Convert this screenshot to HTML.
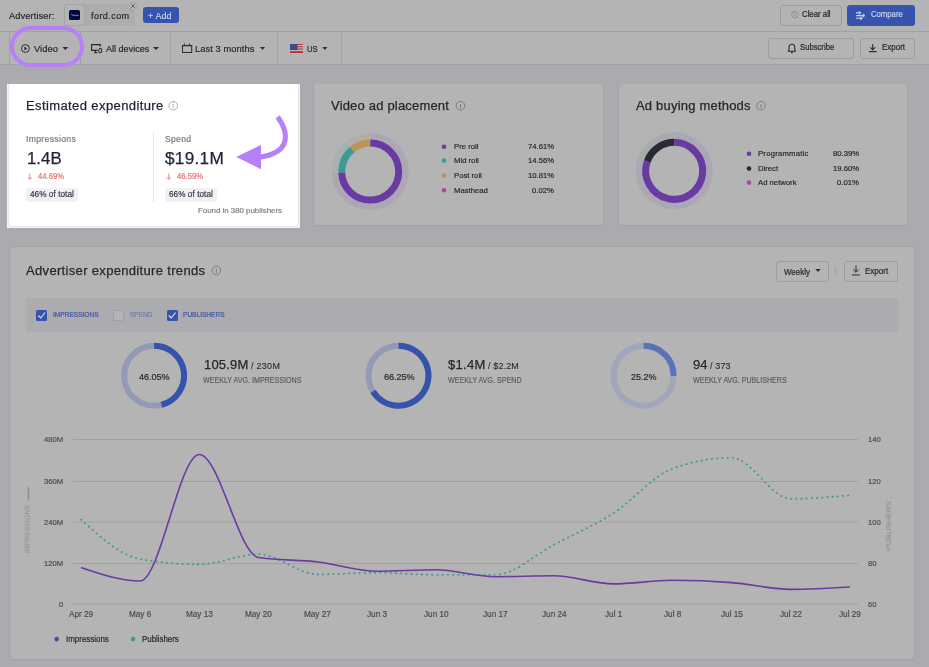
<!DOCTYPE html>
<html><head><meta charset="utf-8">
<style>
*{box-sizing:border-box;margin:0;padding:0}
html,body{width:929px;height:667px;overflow:hidden}
body{position:relative;background:#ababaf;font-family:"Liberation Sans",sans-serif}
.a{position:absolute}
.t{position:absolute;white-space:nowrap;font-family:"Liberation Sans",sans-serif;will-change:transform}
.bar{position:absolute;left:0;width:929px;background:#b4b4b4}
.vs{position:absolute;width:1px;background:#a2a2a3}
.btn{position:absolute;border:1px solid #9d9da0;border-radius:3px;background:#b4b4b4}
.card{position:absolute;background:#b4b4b4;border-radius:3px;box-shadow:0 0 0 1px #a3a3a8, 0 1px 2px rgba(0,0,0,0.06)}
svg{position:absolute;left:0;top:0;overflow:visible}
</style></head><body>
<!-- top bars -->
<div class="bar" style="top:0;height:31px"></div>
<div class="a" style="left:0;top:31px;width:929px;height:1px;background:#a2a2a4"></div>
<div class="bar" style="top:32px;height:32px"></div>
<div class="a" style="left:0;top:64px;width:929px;height:1px;background:#a2a2a4"></div>
<div class="vs" style="left:9px;top:32px;height:32px"></div>
<div class="vs" style="left:80px;top:32px;height:32px"></div>
<div class="vs" style="left:170px;top:32px;height:32px"></div>
<div class="vs" style="left:277px;top:32px;height:32px"></div>
<div class="vs" style="left:341px;top:32px;height:32px"></div>

<!-- chip -->
<div class="a" style="left:64px;top:4px;width:71px;height:22px;background:#adadaf;border-radius:3px"></div>
<div class="a" style="left:64px;top:4px;width:21px;height:22px;background:#b4b4b4;border:1px solid #a4a4a6;border-radius:3px"></div>
<div class="a" style="left:69px;top:10px;width:11px;height:10px;background:#05063c;border-radius:1.5px"></div>
<svg width="929" height="667"><path d="M70.5,13.5 C72,15 74,15.5 79,15.2 M71.5,14.8 C73,15.6 76,15.8 78.5,15.5" stroke="#8f93b8" stroke-width="0.6" fill="none"/></svg>

<div class="btn" style="left:143px;top:7px;width:36px;height:16px;background:#3654ad;border:none"></div>
<div class="btn" style="left:780px;top:5px;width:62px;height:21px"></div>

<div class="btn" style="left:847px;top:5px;width:68px;height:21px;background:#3654ad;border:none"></div>
<div class="btn" style="left:768px;top:38px;width:86px;height:21px"></div>
<div class="btn" style="left:860px;top:38px;width:55px;height:21px"></div>

<svg width="929" height="667">
 <!-- play icon -->
 <circle cx="25.4" cy="48.5" r="3.9" fill="none" stroke="#2b2b33" stroke-width="1"/>
 <path d="M24.3,46.6 L27.2,48.5 L24.3,50.4Z" fill="#2b2b33"/>
 <path d="M62.4,47 L68.2,47 L65.3,50Z" fill="#2b2b33"/>
 <!-- devices icon -->
 <path d="M97.6,50.4 L91.6,50.4 L91.6,44.6 L100.2,44.6 L100.2,46.8" fill="none" stroke="#23232b" stroke-width="1.1"/>
 <path d="M95.5,50.4 L95.5,52.6 M94,52.7 L97.6,52.7" stroke="#23232b" stroke-width="1"/>
 <rect x="98.9" y="48.6" width="2.8" height="4" rx="0.6" fill="none" stroke="#23232b" stroke-width="1"/>
 <path d="M153,47 L159,47 L156,50Z" fill="#2b2b33"/>
 <!-- calendar -->
 <rect x="182.5" y="45.5" width="9.2" height="7" fill="none" stroke="#2b2b33" stroke-width="1"/>
 <path d="M182,45.6 L192.2,45.6" stroke="#2b2b33" stroke-width="1.3"/>
 <path d="M184.4,43.4 L184.4,45 M189.4,43.4 L189.4,45" stroke="#2b2b33" stroke-width="0.9"/>
 <path d="M260,47 L265,47 L262.5,50Z" fill="#2b2b33"/>
 <!-- flag -->
 <rect x="290" y="44" width="13" height="9" fill="#b8b8c0"/>
 <rect x="290" y="44" width="13" height="1" fill="#b83a3a"/>
 <rect x="290" y="46.2" width="13" height="1.1" fill="#b83a3a"/>
 <rect x="290" y="48.5" width="13" height="1.1" fill="#b83a3a"/>
 <rect x="290" y="51.2" width="13" height="1.8" fill="#b8322f"/>
 <rect x="290" y="44" width="7.5" height="6" fill="#3d4a8c"/>
 <path d="M322.4,47 L327.4,47 L324.9,50Z" fill="#2b2b33"/>
 <!-- close x in clear all -->
 <circle cx="795" cy="14.6" r="3.3" fill="none" stroke="#8a8a8e" stroke-width="0.9"/><path d="M793.7,13.3 L796.3,15.9 M796.3,13.3 L793.7,15.9" stroke="#8a8a8e" stroke-width="0.8"/>
 <circle cx="133" cy="5.9" r="3.6" fill="#bababc" stroke="#9c9ca0" stroke-width="0.7"/><path d="M131.2,4.1 L134.8,7.7 M134.8,4.1 L131.2,7.7" stroke="#48484c" stroke-width="0.9"/>
 <!-- compare icon -->
 <g stroke="#cdd3ec" stroke-width="1.1" fill="#cdd3ec">
 <path d="M856,12.9 L859.5,12.9 M856,15.6 L863.3,15.6 M856,18.3 L861,18.3"/>
 <path d="M859.3,11.2 L861.2,12.9 L859.3,14.6Z M863,13.9 L865,15.6 L863,17.3Z M860.7,16.6 L862.6,18.3 L860.7,20Z" stroke-width="0.5"/>
 </g>
 <!-- bell -->
 <path d="M788.3,51.3 L795.5,51.3 L794.8,50 L794.8,47.3 C794.8,45.3 793.7,44.3 791.9,44.3 C790.1,44.3 789,45.3 789,47.3 L789,50Z" fill="none" stroke="#2b2b33" stroke-width="1.1" stroke-linejoin="round"/>
 <path d="M791,52.6 L792.8,52.6" stroke="#2b2b33" stroke-width="1.2"/>
 <!-- download -->
 <path d="M872.7,44 L872.7,49.6 M870.2,47.3 L872.7,49.8 L875.2,47.3" stroke="#2b2b33" stroke-width="1.1" fill="none"/>
 <path d="M869,51.6 L876.6,51.6" stroke="#2b2b33" stroke-width="1.2"/>
</svg>

<!-- cards -->
<div class="card" style="left:314px;top:84px;width:289px;height:141px"></div>
<div class="card" style="left:619px;top:84px;width:288px;height:141px"></div>
<div class="card" style="left:10px;top:247px;width:904px;height:412px"></div>

<!-- highlight card 1 -->
<div class="a" style="left:7px;top:84px;width:293px;height:144px;background:#f3f3f8"></div>
<div class="a" style="left:9px;top:82px;width:289px;height:143.5px;background:#fff;border-radius:3px;box-shadow:0 0 0 1px #e6e6ee"></div>
<div class="a" style="left:0;top:65px;width:929px;height:19px;background:#ababaf"></div>
<div class="a" style="left:153px;top:132px;width:1px;height:70px;background:#e3e3ea"></div>
<div class="a" style="left:26px;top:188px;width:52px;height:13.5px;background:#f1f1f4;border-radius:3px"></div>
<div class="a" style="left:165px;top:188px;width:52px;height:13.5px;background:#f1f1f4;border-radius:3px"></div>

<!-- filter bar -->
<div class="a" style="left:26px;top:298px;width:872px;height:33.5px;background:#acabb0;border-radius:3px"></div>
<div class="a" style="left:36px;top:310px;width:11px;height:10.5px;background:#3654ad;border-radius:1.5px"></div>
<div class="a" style="left:113px;top:310px;width:11px;height:10.5px;background:#b4b4b4;border:1px solid #a0a0a4;border-radius:1.5px"></div>
<div class="a" style="left:166.5px;top:310px;width:11px;height:10.5px;background:#3654ad;border-radius:1.5px"></div>
<div class="btn" style="left:775.5px;top:260.5px;width:53px;height:21px"></div>
<div class="a" style="left:835px;top:268px;width:1px;height:6px;background:#9d9da0"></div>
<div class="btn" style="left:843.5px;top:260.5px;width:54px;height:21px"></div>

<svg width="929" height="667">
 <!-- info icons -->
 <circle cx="173.2" cy="105.7" r="4.3" fill="none" stroke="#a3a5b0" stroke-width="0.9"/>
 <path d="M173.2,104 L173.2,108.2" stroke="#a3a5b0" stroke-width="0.9"/>
 <circle cx="173.2" cy="102.8" r="0.5" fill="#a3a5b0"/>
 <circle cx="460.5" cy="105.7" r="4.3" fill="none" stroke="#76767c" stroke-width="0.9"/>
 <path d="M460.5,104 L460.5,108.2" stroke="#76767c" stroke-width="0.9"/>
 <circle cx="761" cy="105.7" r="4.3" fill="none" stroke="#76767c" stroke-width="0.9"/>
 <path d="M761,104 L761,108.2" stroke="#76767c" stroke-width="0.9"/>
 <circle cx="216.4" cy="270.6" r="4.3" fill="none" stroke="#76767c" stroke-width="0.9"/>
 <path d="M216.4,269 L216.4,273.2" stroke="#76767c" stroke-width="0.9"/>
 <!-- red arrows -->
 <path d="M29.8,173.5 L29.8,179.5 M27.8,177.3 L29.8,179.5 L31.8,177.3" stroke="#f0757a" stroke-width="0.9" fill="none"/>
 <path d="M168.8,173.5 L168.8,179.5 M166.8,177.3 L168.8,179.5 L170.8,177.3" stroke="#f0757a" stroke-width="0.9" fill="none"/>
 <!-- arrow -->
 <path d="M277.6,116.8 C289,133 292,153 258,157.4" stroke="#b680f8" stroke-width="5" fill="none"/>
 <path d="M236.3,157.1 L261,144.9 L261,169.2Z" fill="#b680f8"/>
 <!-- checks -->
 <path d="M38.3,315.5 L40.8,318 L45,312.5" stroke="#dfe4f5" stroke-width="1.1" fill="none"/>
 <path d="M168.8,315.5 L171.3,318 L175.5,312.5" stroke="#dfe4f5" stroke-width="1.1" fill="none"/>
 <!-- weekly caret -->
 <path d="M815.5,269 L820.6,269 L818,272Z" fill="#2b2b33"/>
 <path d="M856,265.5 L856,272 M853.2,269.5 L856,272.3 L858.8,269.5 M852,275 L860,275" stroke="#2b2b33" stroke-width="1" fill="none"/>
 <!-- donuts -->
 <path d="M370.20,136.35 A35.25,35.25 0 1 1 334.96,172.46" stroke="#aca7b5" stroke-width="6.50" fill="none"/><path d="M370.20,143.10 A28.50,28.50 0 1 1 341.71,172.30" stroke="#6a3aa3" stroke-width="7.00" fill="none"/><path d="M334.96,172.46 A35.25,35.25 0 0 1 348.02,144.20" stroke="#a7b1b0" stroke-width="6.50" fill="none"/><path d="M341.71,172.30 A28.50,28.50 0 0 1 352.27,149.45" stroke="#3e9a94" stroke-width="7.00" fill="none"/><path d="M348.02,144.20 A35.25,35.25 0 0 1 370.16,136.35" stroke="#b3aea6" stroke-width="6.50" fill="none"/><path d="M352.27,149.45 A28.50,28.50 0 0 1 370.16,143.10" stroke="#b99652" stroke-width="7.00" fill="none"/><path d="M370.16,136.35 A35.25,35.25 0 0 1 370.20,136.35" stroke="#b0a6b0" stroke-width="6.50" fill="none"/><path d="M370.16,143.10 A28.50,28.50 0 0 1 370.20,143.10" stroke="#b0479e" stroke-width="7.00" fill="none"/>
 <path d="M674.20,135.55 A35.25,35.25 0 1 1 640.95,159.09" stroke="#aca7b5" stroke-width="6.50" fill="none"/><path d="M674.20,142.30 A28.50,28.50 0 1 1 647.32,161.33" stroke="#6a3aa3" stroke-width="7.00" fill="none"/><path d="M640.95,159.09 A35.25,35.25 0 0 1 674.18,135.55" stroke="#a9aaab" stroke-width="6.50" fill="none"/><path d="M647.32,161.33 A28.50,28.50 0 0 1 674.18,142.30" stroke="#282a36" stroke-width="7.00" fill="none"/>
 <circle cx="154.10" cy="375.70" r="30.00" stroke="#939ab5" stroke-width="6.00" fill="none"/><path d="M154.10,345.70 A30.00,30.00 0 0 1 161.47,404.78" stroke="#3553ad" stroke-width="6.00" fill="none"/>
 <circle cx="398.50" cy="375.70" r="30.00" stroke="#939ab5" stroke-width="6.00" fill="none"/><path d="M398.50,345.70 A30.00,30.00 0 1 1 372.92,391.37" stroke="#3553ad" stroke-width="6.00" fill="none"/>
 <circle cx="643.60" cy="375.70" r="30.00" stroke="#a2a6bb" stroke-width="6.00" fill="none"/><path d="M643.60,345.70 A30.00,30.00 0 0 1 673.60,376.08" stroke="#5b72b8" stroke-width="6.00" fill="none"/>
 <!-- legend dots -->
 <circle cx="444" cy="146.8" r="2.3" fill="#6a3aa3"/>
 <circle cx="444" cy="160.6" r="2.3" fill="#3e9a94"/>
 <circle cx="444" cy="175.4" r="2.3" fill="#b99652"/>
 <circle cx="444" cy="190.3" r="2.3" fill="#b0479e"/>
 <circle cx="749" cy="153.8" r="2.3" fill="#6a3aa3"/>
 <circle cx="749" cy="168.6" r="2.3" fill="#282a36"/>
 <circle cx="749" cy="182.6" r="2.3" fill="#b0479e"/>
 <!-- grid -->
 <g stroke="#a1a1a3" stroke-width="1">
  <path d="M73,439.5 L858,439.5 M73,481.5 L858,481.5 M73,522 L858,522 M73,563.5 L858,563.5 M73,604 L858,604"/>
 </g>
 <path d="M81.00,519.50 C100.72,537.45 120.44,555.40 140.15,559.00 C159.87,562.60 179.59,564.40 199.31,564.40 C219.03,564.40 238.74,554.20 258.46,554.20 C278.18,554.20 297.90,574.40 317.62,574.40 C337.33,574.40 357.05,572.70 376.77,572.70 C396.49,572.70 416.21,574.80 435.92,574.80 C455.64,574.80 475.36,574.80 495.08,574.80 C514.79,574.80 534.51,554.77 554.23,544.50 C573.95,534.23 593.67,525.85 613.38,513.20 C633.10,500.55 652.82,475.80 672.54,468.60 C692.26,461.40 711.97,457.80 731.69,457.80 C751.41,457.80 771.13,498.80 790.85,498.80 C810.56,498.80 830.28,497.00 850.00,495.20" stroke="#3a9a94" stroke-width="1.8" fill="none" stroke-dasharray="0.4 4.8" stroke-linecap="round"/>
 <path d="M81.00,567.50 C100.72,574.25 120.44,581.00 140.15,581.00 C159.87,581.00 179.59,454.50 199.31,454.50 C219.03,454.50 238.74,554.50 258.46,557.50 C278.18,560.50 297.90,559.70 317.62,562.00 C337.33,564.30 357.05,571.30 376.77,571.30 C396.49,571.30 416.21,569.80 435.92,569.80 C455.64,569.80 475.36,576.70 495.08,576.70 C514.79,576.70 534.51,575.80 554.23,575.80 C573.95,575.80 593.67,583.90 613.38,583.90 C633.10,583.90 652.82,580.30 672.54,580.30 C692.26,580.30 711.97,581.08 731.69,582.60 C751.41,584.12 771.13,589.40 790.85,589.40 C810.56,589.40 830.28,588.20 850.00,587.00" stroke="#6a3aa3" stroke-width="1.6" fill="none"/>
 <!-- axis titles lines -->
 <path d="M28.5,487.2 L28.5,500.4" stroke="#8f8f97" stroke-width="1.6"/>
 <path d="M890.5,494.4 L890.5,499.5" stroke="#9c9ca4" stroke-width="1.4" stroke-dasharray="1 2"/>
 <circle cx="56.7" cy="639.1" r="2.3" fill="#6a3aa3"/>
 <circle cx="133" cy="639.1" r="2.3" fill="#3a9a94"/>
</svg>
<div class="t" style="left:28px;top:529px;font-size:6.6px;line-height:6.6px;color:#8a8a92;transform:translate(-50%,-50%) rotate(-90deg);transform-origin:center;letter-spacing:0.2px">IMPRESSIONS</div>
<div class="t" style="left:889px;top:525.6px;font-size:8px;line-height:8px;color:#8a8a94;transform:translate(-50%,-50%) rotate(-90deg);transform-origin:center;letter-spacing:-0.1px">PUBLISHERS</div>

<!-- purple oval -->
<div class="a" style="left:10px;top:26.2px;width:73.8px;height:41px;border:4.8px solid #b77ff8;border-radius:21px"></div>

<span class="t" id="t0" style="left:9.10px;top:12.20px;font-size:9.300px;line-height:9.300px;color:#26262f;-webkit-text-stroke:0.18px currentColor;letter-spacing:0.085px;">Advertiser:<i class="mk" style="display:inline-block;width:0;height:0"></i></span>
<span class="t" id="t1" style="left:91.00px;top:11.90px;font-size:9.114px;line-height:9.114px;color:#26262f;-webkit-text-stroke:0.18px currentColor;letter-spacing:0.393px;">ford.com<i class="mk" style="display:inline-block;width:0;height:0"></i></span>
<span class="t" id="t2" style="left:148.40px;top:11.70px;font-size:8.928px;line-height:8.928px;color:#c9d1ec;-webkit-text-stroke:0.18px currentColor;letter-spacing:0.108px;">+ Add<i class="mk" style="display:inline-block;width:0;height:0"></i></span>
<span class="t" id="t3" style="left:801.80px;top:11.30px;font-size:7.815px;line-height:7.815px;color:#26262f;-webkit-text-stroke:0.18px currentColor;transform:scaleY(1.0472);transform-origin:0 6.00px;">Clear all<i class="mk" style="display:inline-block;width:0;height:0"></i></span>
<span class="t" id="t4" style="left:871.00px;top:11.30px;font-size:7.736px;line-height:7.736px;color:#c9d1ec;-webkit-text-stroke:0.18px currentColor;transform:scaleY(1.0579);transform-origin:0 6.00px;">Compare<i class="mk" style="display:inline-block;width:0;height:0"></i></span>
<span class="t" id="t5" style="left:34.30px;top:45.10px;font-size:9.300px;line-height:9.300px;color:#26262f;-webkit-text-stroke:0.18px currentColor;letter-spacing:0.090px;">Video<i class="mk" style="display:inline-block;width:0;height:0"></i></span>
<span class="t" id="t6" style="left:105.60px;top:45.10px;font-size:9.053px;line-height:9.053px;color:#26262f;-webkit-text-stroke:0.18px currentColor;transform:scaleY(1.0273);transform-origin:0 7.00px;">All devices<i class="mk" style="display:inline-block;width:0;height:0"></i></span>
<span class="t" id="t7" style="left:195.40px;top:45.10px;font-size:9.300px;line-height:9.300px;color:#26262f;-webkit-text-stroke:0.18px currentColor;letter-spacing:0.079px;">Last 3 months<i class="mk" style="display:inline-block;width:0;height:0"></i></span>
<span class="t" id="t8" style="left:307.40px;top:46.10px;font-size:7.754px;line-height:7.754px;color:#26262f;-webkit-text-stroke:0.18px currentColor;transform:scaleY(1.1994);transform-origin:0 6.00px;">US<i class="mk" style="display:inline-block;width:0;height:0"></i></span>
<span class="t" id="t9" style="left:799.50px;top:44.40px;font-size:7.696px;line-height:7.696px;color:#26262f;-webkit-text-stroke:0.18px currentColor;transform:scaleY(1.0876);transform-origin:0 6.00px;">Subscribe<i class="mk" style="display:inline-block;width:0;height:0"></i></span>
<span class="t" id="t10" style="left:882.20px;top:44.40px;font-size:7.987px;line-height:7.987px;color:#26262f;-webkit-text-stroke:0.18px currentColor;transform:scaleY(1.0480);transform-origin:0 6.00px;">Export<i class="mk" style="display:inline-block;width:0;height:0"></i></span>
<span class="t" id="t11" style="left:26.10px;top:99.00px;font-size:13.020px;line-height:13.020px;color:#1f2337;-webkit-text-stroke:0.25px currentColor;letter-spacing:0.387px;">Estimated expenditure<i class="mk" style="display:inline-block;width:0;height:0"></i></span>
<span class="t" id="t12" style="left:26.00px;top:135.40px;font-size:8.649px;line-height:8.649px;color:#747784;-webkit-text-stroke:0.18px currentColor;letter-spacing:0.322px;">Impressions<i class="mk" style="display:inline-block;width:0;height:0"></i></span>
<span class="t" id="t13" style="left:165.00px;top:135.40px;font-size:8.649px;line-height:8.649px;color:#747784;-webkit-text-stroke:0.18px currentColor;letter-spacing:0.264px;">Spend<i class="mk" style="display:inline-block;width:0;height:0"></i></span>
<span class="t" id="t14" style="left:26.60px;top:150.90px;font-size:16.800px;line-height:16.800px;color:#1f2337;-webkit-text-stroke:0.25px currentColor;letter-spacing:0.024px;">1.4B<i class="mk" style="display:inline-block;width:0;height:0"></i></span>
<span class="t" id="t15" style="left:165.30px;top:149.90px;font-size:17.200px;line-height:17.200px;color:#1f2337;-webkit-text-stroke:0.25px currentColor;letter-spacing:0.278px;">$19.1M<i class="mk" style="display:inline-block;width:0;height:0"></i></span>
<span class="t" id="t16" style="left:37.80px;top:173.00px;font-size:7.694px;line-height:7.694px;color:#ef6f74;-webkit-text-stroke:0.20px currentColor;transform:scaleY(1.1308);transform-origin:0 6.00px;">44.69%<i class="mk" style="display:inline-block;width:0;height:0"></i></span>
<span class="t" id="t17" style="left:176.60px;top:173.00px;font-size:7.723px;line-height:7.723px;color:#ef6f74;-webkit-text-stroke:0.20px currentColor;transform:scaleY(1.1265);transform-origin:0 6.00px;">46.59%<i class="mk" style="display:inline-block;width:0;height:0"></i></span>
<span class="t" id="t18" style="left:29.90px;top:191.20px;font-size:8.200px;line-height:8.200px;color:#303343;-webkit-text-stroke:0.18px currentColor;letter-spacing:0.053px;">46% of total<i class="mk" style="display:inline-block;width:0;height:0"></i></span>
<span class="t" id="t19" style="left:169.00px;top:191.20px;font-size:8.200px;line-height:8.200px;color:#303343;-webkit-text-stroke:0.18px currentColor;letter-spacing:0.053px;">66% of total<i class="mk" style="display:inline-block;width:0;height:0"></i></span>
<span class="t" id="t20" style="left:197.60px;top:207.00px;font-size:7.905px;line-height:7.905px;color:#7a7c88;-webkit-text-stroke:0.18px currentColor;letter-spacing:-0.013px;">Found in 380 publishers<i class="mk" style="display:inline-block;width:0;height:0"></i></span>
<span class="t" id="t21" style="left:331.00px;top:99.00px;font-size:13.020px;line-height:13.020px;color:#26262f;-webkit-text-stroke:0.25px currentColor;letter-spacing:0.182px;">Video ad placement<i class="mk" style="display:inline-block;width:0;height:0"></i></span>
<span class="t" id="t22" style="left:453.70px;top:143.00px;font-size:7.719px;line-height:7.719px;color:#26262f;-webkit-text-stroke:0.18px currentColor;">Pre roll<i class="mk" style="display:inline-block;width:0;height:0"></i></span>
<span class="t" id="t23" style="left:527.77px;top:143.00px;font-size:7.719px;line-height:7.719px;color:#26262f;-webkit-text-stroke:0.18px currentColor;">74.61%<i class="mk" style="display:inline-block;width:0;height:0"></i></span>
<span class="t" id="t24" style="left:453.70px;top:156.90px;font-size:7.719px;line-height:7.719px;color:#26262f;-webkit-text-stroke:0.18px currentColor;">Mid roll<i class="mk" style="display:inline-block;width:0;height:0"></i></span>
<span class="t" id="t25" style="left:527.77px;top:156.90px;font-size:7.719px;line-height:7.719px;color:#26262f;-webkit-text-stroke:0.18px currentColor;">14.56%<i class="mk" style="display:inline-block;width:0;height:0"></i></span>
<span class="t" id="t26" style="left:453.70px;top:171.90px;font-size:7.719px;line-height:7.719px;color:#26262f;-webkit-text-stroke:0.18px currentColor;">Post roll<i class="mk" style="display:inline-block;width:0;height:0"></i></span>
<span class="t" id="t27" style="left:527.77px;top:171.90px;font-size:7.719px;line-height:7.719px;color:#26262f;-webkit-text-stroke:0.18px currentColor;">10.81%<i class="mk" style="display:inline-block;width:0;height:0"></i></span>
<span class="t" id="t28" style="left:453.70px;top:186.70px;font-size:7.719px;line-height:7.719px;color:#26262f;-webkit-text-stroke:0.18px currentColor;">Masthead<i class="mk" style="display:inline-block;width:0;height:0"></i></span>
<span class="t" id="t29" style="left:532.06px;top:186.70px;font-size:7.719px;line-height:7.719px;color:#26262f;-webkit-text-stroke:0.18px currentColor;">0.02%<i class="mk" style="display:inline-block;width:0;height:0"></i></span>
<span class="t" id="t30" style="left:635.60px;top:99.00px;font-size:13.020px;line-height:13.020px;color:#26262f;-webkit-text-stroke:0.25px currentColor;letter-spacing:0.193px;">Ad buying methods<i class="mk" style="display:inline-block;width:0;height:0"></i></span>
<span class="t" id="t31" style="left:758.10px;top:149.80px;font-size:7.719px;line-height:7.719px;color:#26262f;-webkit-text-stroke:0.18px currentColor;letter-spacing:0.219px;">Programmatic<i class="mk" style="display:inline-block;width:0;height:0"></i></span>
<span class="t" id="t32" style="left:832.87px;top:149.80px;font-size:7.719px;line-height:7.719px;color:#26262f;-webkit-text-stroke:0.18px currentColor;">80.39%<i class="mk" style="display:inline-block;width:0;height:0"></i></span>
<span class="t" id="t33" style="left:758.10px;top:164.90px;font-size:7.719px;line-height:7.719px;color:#26262f;-webkit-text-stroke:0.18px currentColor;">Direct<i class="mk" style="display:inline-block;width:0;height:0"></i></span>
<span class="t" id="t34" style="left:832.87px;top:164.90px;font-size:7.719px;line-height:7.719px;color:#26262f;-webkit-text-stroke:0.18px currentColor;">19.60%<i class="mk" style="display:inline-block;width:0;height:0"></i></span>
<span class="t" id="t35" style="left:758.10px;top:178.90px;font-size:7.719px;line-height:7.719px;color:#26262f;-webkit-text-stroke:0.18px currentColor;">Ad network<i class="mk" style="display:inline-block;width:0;height:0"></i></span>
<span class="t" id="t36" style="left:837.16px;top:178.90px;font-size:7.719px;line-height:7.719px;color:#26262f;-webkit-text-stroke:0.18px currentColor;">0.01%<i class="mk" style="display:inline-block;width:0;height:0"></i></span>
<span class="t" id="t37" style="left:26.10px;top:264.30px;font-size:13.020px;line-height:13.020px;color:#26262f;-webkit-text-stroke:0.25px currentColor;letter-spacing:0.321px;">Advertiser expenditure trends<i class="mk" style="display:inline-block;width:0;height:0"></i></span>
<span class="t" id="t38" style="left:52.60px;top:312.30px;font-size:6.573px;line-height:6.573px;color:#3b53a8;-webkit-text-stroke:0.18px currentColor;transform:scaleY(1.0752);transform-origin:0 5.00px;">IMPRESSIONS<i class="mk" style="display:inline-block;width:0;height:0"></i></span>
<span class="t" id="t39" style="left:129.60px;top:312.30px;font-size:6.516px;line-height:6.516px;color:#6f7ba6;-webkit-text-stroke:0.18px currentColor;transform:scaleY(1.0847);transform-origin:0 5.00px;">SPEND<i class="mk" style="display:inline-block;width:0;height:0"></i></span>
<span class="t" id="t40" style="left:182.60px;top:312.30px;font-size:6.573px;line-height:6.573px;color:#3b53a8;-webkit-text-stroke:0.18px currentColor;transform:scaleY(1.0752);transform-origin:0 5.00px;">PUBLISHERS<i class="mk" style="display:inline-block;width:0;height:0"></i></span>
<span class="t" id="t41" style="left:784.10px;top:268.50px;font-size:7.960px;line-height:7.960px;color:#26262f;-webkit-text-stroke:0.18px currentColor;transform:scaleY(1.0515);transform-origin:0 6.00px;">Weekly<i class="mk" style="display:inline-block;width:0;height:0"></i></span>
<span class="t" id="t42" style="left:865.00px;top:268.30px;font-size:8.020px;line-height:8.020px;color:#26262f;-webkit-text-stroke:0.18px currentColor;transform:scaleY(1.0436);transform-origin:0 6.00px;">Export<i class="mk" style="display:inline-block;width:0;height:0"></i></span>
<span class="t" id="t43" style="left:138.70px;top:373.20px;font-size:9.114px;line-height:9.114px;color:#26262f;-webkit-text-stroke:0.18px currentColor;letter-spacing:-0.059px;">46.05%<i class="mk" style="display:inline-block;width:0;height:0"></i></span>
<span class="t" id="t44" style="left:203.80px;top:357.90px;font-size:13.000px;line-height:13.000px;color:#26262f;-webkit-text-stroke:0.25px currentColor;letter-spacing:0.174px;">105.9M<i class="mk" style="display:inline-block;width:0;height:0"></i></span>
<span class="t" id="t45" style="left:250.60px;top:361.90px;font-size:9.000px;line-height:9.000px;color:#26262f;-webkit-text-stroke:0.08px currentColor;letter-spacing:0.277px;">/ 230M<i class="mk" style="display:inline-block;width:0;height:0"></i></span>
<span class="t" id="t46" style="left:203.40px;top:378.40px;font-size:7.123px;line-height:7.123px;color:#5e5e66;-webkit-text-stroke:0.18px currentColor;transform:scaleY(1.1512);transform-origin:0 5.00px;">WEEKLY AVG. IMPRESSIONS<i class="mk" style="display:inline-block;width:0;height:0"></i></span>
<span class="t" id="t47" style="left:383.70px;top:373.20px;font-size:9.114px;line-height:9.114px;color:#26262f;-webkit-text-stroke:0.18px currentColor;letter-spacing:-0.059px;">66.25%<i class="mk" style="display:inline-block;width:0;height:0"></i></span>
<span class="t" id="t48" style="left:448.40px;top:357.90px;font-size:13.000px;line-height:13.000px;color:#26262f;-webkit-text-stroke:0.25px currentColor;letter-spacing:0.325px;">$1.4M<i class="mk" style="display:inline-block;width:0;height:0"></i></span>
<span class="t" id="t49" style="left:487.90px;top:361.90px;font-size:9.000px;line-height:9.000px;color:#26262f;-webkit-text-stroke:0.08px currentColor;letter-spacing:0.130px;">/ $2.2M<i class="mk" style="display:inline-block;width:0;height:0"></i></span>
<span class="t" id="t50" style="left:448.00px;top:378.40px;font-size:7.141px;line-height:7.141px;color:#5e5e66;-webkit-text-stroke:0.18px currentColor;transform:scaleY(1.1483);transform-origin:0 5.00px;">WEEKLY AVG. SPEND<i class="mk" style="display:inline-block;width:0;height:0"></i></span>
<span class="t" id="t51" style="left:630.50px;top:373.20px;font-size:8.962px;line-height:8.962px;color:#26262f;-webkit-text-stroke:0.18px currentColor;transform:scaleY(1.0170);transform-origin:0 7.00px;">25.2%<i class="mk" style="display:inline-block;width:0;height:0"></i></span>
<span class="t" id="t52" style="left:692.70px;top:357.90px;font-size:13.000px;line-height:13.000px;color:#26262f;-webkit-text-stroke:0.25px currentColor;letter-spacing:-0.030px;">94<i class="mk" style="display:inline-block;width:0;height:0"></i></span>
<span class="t" id="t53" style="left:710.00px;top:361.90px;font-size:9.000px;line-height:9.000px;color:#26262f;-webkit-text-stroke:0.08px currentColor;letter-spacing:0.147px;">/ 373<i class="mk" style="display:inline-block;width:0;height:0"></i></span>
<span class="t" id="t54" style="left:692.70px;top:378.40px;font-size:7.081px;line-height:7.081px;color:#5e5e66;-webkit-text-stroke:0.18px currentColor;transform:scaleY(1.1580);transform-origin:0 5.00px;">WEEKLY AVG. PUBLISHERS<i class="mk" style="display:inline-block;width:0;height:0"></i></span>
<span class="t" id="t55" style="left:44.00px;top:436.20px;font-size:7.600px;line-height:7.600px;color:#4a4a52;-webkit-text-stroke:0.18px currentColor;">480M<i class="mk" style="display:inline-block;width:0;height:0"></i></span>
<span class="t" id="t56" style="left:44.00px;top:478.00px;font-size:7.600px;line-height:7.600px;color:#4a4a52;-webkit-text-stroke:0.18px currentColor;">360M<i class="mk" style="display:inline-block;width:0;height:0"></i></span>
<span class="t" id="t57" style="left:44.00px;top:518.70px;font-size:7.600px;line-height:7.600px;color:#4a4a52;-webkit-text-stroke:0.18px currentColor;">240M<i class="mk" style="display:inline-block;width:0;height:0"></i></span>
<span class="t" id="t58" style="left:44.00px;top:560.00px;font-size:7.600px;line-height:7.600px;color:#4a4a52;-webkit-text-stroke:0.18px currentColor;">120M<i class="mk" style="display:inline-block;width:0;height:0"></i></span>
<span class="t" id="t59" style="left:58.78px;top:600.70px;font-size:7.600px;line-height:7.600px;color:#4a4a52;-webkit-text-stroke:0.18px currentColor;">0<i class="mk" style="display:inline-block;width:0;height:0"></i></span>
<span class="t" id="t60" style="left:868.40px;top:436.20px;font-size:7.600px;line-height:7.600px;color:#4a4a52;-webkit-text-stroke:0.18px currentColor;">140<i class="mk" style="display:inline-block;width:0;height:0"></i></span>
<span class="t" id="t61" style="left:868.40px;top:478.00px;font-size:7.600px;line-height:7.600px;color:#4a4a52;-webkit-text-stroke:0.18px currentColor;">120<i class="mk" style="display:inline-block;width:0;height:0"></i></span>
<span class="t" id="t62" style="left:868.40px;top:518.70px;font-size:7.600px;line-height:7.600px;color:#4a4a52;-webkit-text-stroke:0.18px currentColor;">100<i class="mk" style="display:inline-block;width:0;height:0"></i></span>
<span class="t" id="t63" style="left:868.40px;top:560.00px;font-size:7.600px;line-height:7.600px;color:#4a4a52;-webkit-text-stroke:0.18px currentColor;">80<i class="mk" style="display:inline-block;width:0;height:0"></i></span>
<span class="t" id="t64" style="left:868.40px;top:600.70px;font-size:7.600px;line-height:7.600px;color:#4a4a52;-webkit-text-stroke:0.18px currentColor;">60<i class="mk" style="display:inline-block;width:0;height:0"></i></span>
<span class="t" id="t65" style="left:68.94px;top:611.20px;font-size:8.200px;line-height:8.200px;color:#4a4a52;-webkit-text-stroke:0.18px currentColor;">Apr 29<i class="mk" style="display:inline-block;width:0;height:0"></i></span>
<span class="t" id="t66" style="left:129.01px;top:611.20px;font-size:8.200px;line-height:8.200px;color:#4a4a52;-webkit-text-stroke:0.18px currentColor;">May 6<i class="mk" style="display:inline-block;width:0;height:0"></i></span>
<span class="t" id="t67" style="left:185.88px;top:611.20px;font-size:8.200px;line-height:8.200px;color:#4a4a52;-webkit-text-stroke:0.18px currentColor;">May 13<i class="mk" style="display:inline-block;width:0;height:0"></i></span>
<span class="t" id="t68" style="left:245.04px;top:611.20px;font-size:8.200px;line-height:8.200px;color:#4a4a52;-webkit-text-stroke:0.18px currentColor;">May 20<i class="mk" style="display:inline-block;width:0;height:0"></i></span>
<span class="t" id="t69" style="left:304.19px;top:611.20px;font-size:8.200px;line-height:8.200px;color:#4a4a52;-webkit-text-stroke:0.18px currentColor;">May 27<i class="mk" style="display:inline-block;width:0;height:0"></i></span>
<span class="t" id="t70" style="left:366.75px;top:611.20px;font-size:8.200px;line-height:8.200px;color:#4a4a52;-webkit-text-stroke:0.18px currentColor;">Jun 3<i class="mk" style="display:inline-block;width:0;height:0"></i></span>
<span class="t" id="t71" style="left:423.63px;top:611.20px;font-size:8.200px;line-height:8.200px;color:#4a4a52;-webkit-text-stroke:0.18px currentColor;">Jun 10<i class="mk" style="display:inline-block;width:0;height:0"></i></span>
<span class="t" id="t72" style="left:482.79px;top:611.20px;font-size:8.200px;line-height:8.200px;color:#4a4a52;-webkit-text-stroke:0.18px currentColor;">Jun 17<i class="mk" style="display:inline-block;width:0;height:0"></i></span>
<span class="t" id="t73" style="left:541.94px;top:611.20px;font-size:8.200px;line-height:8.200px;color:#4a4a52;-webkit-text-stroke:0.18px currentColor;">Jun 24<i class="mk" style="display:inline-block;width:0;height:0"></i></span>
<span class="t" id="t74" style="left:604.74px;top:611.20px;font-size:8.200px;line-height:8.200px;color:#4a4a52;-webkit-text-stroke:0.18px currentColor;">Jul 1<i class="mk" style="display:inline-block;width:0;height:0"></i></span>
<span class="t" id="t75" style="left:663.89px;top:611.20px;font-size:8.200px;line-height:8.200px;color:#4a4a52;-webkit-text-stroke:0.18px currentColor;">Jul 8<i class="mk" style="display:inline-block;width:0;height:0"></i></span>
<span class="t" id="t76" style="left:720.77px;top:611.20px;font-size:8.200px;line-height:8.200px;color:#4a4a52;-webkit-text-stroke:0.18px currentColor;">Jul 15<i class="mk" style="display:inline-block;width:0;height:0"></i></span>
<span class="t" id="t77" style="left:779.92px;top:611.20px;font-size:8.200px;line-height:8.200px;color:#4a4a52;-webkit-text-stroke:0.18px currentColor;">Jul 22<i class="mk" style="display:inline-block;width:0;height:0"></i></span>
<span class="t" id="t78" style="left:839.08px;top:611.20px;font-size:8.200px;line-height:8.200px;color:#4a4a52;-webkit-text-stroke:0.18px currentColor;">Jul 29<i class="mk" style="display:inline-block;width:0;height:0"></i></span>
<span class="t" id="t79" style="left:65.50px;top:636.20px;font-size:7.941px;line-height:7.941px;color:#26262f;-webkit-text-stroke:0.18px currentColor;transform:scaleY(1.0830);transform-origin:0 6.00px;">Impressions<i class="mk" style="display:inline-block;width:0;height:0"></i></span>
<span class="t" id="t80" style="left:142.10px;top:636.20px;font-size:7.882px;line-height:7.882px;color:#26262f;-webkit-text-stroke:0.18px currentColor;transform:scaleY(1.0911);transform-origin:0 6.00px;">Publishers<i class="mk" style="display:inline-block;width:0;height:0"></i></span>
</body></html>
